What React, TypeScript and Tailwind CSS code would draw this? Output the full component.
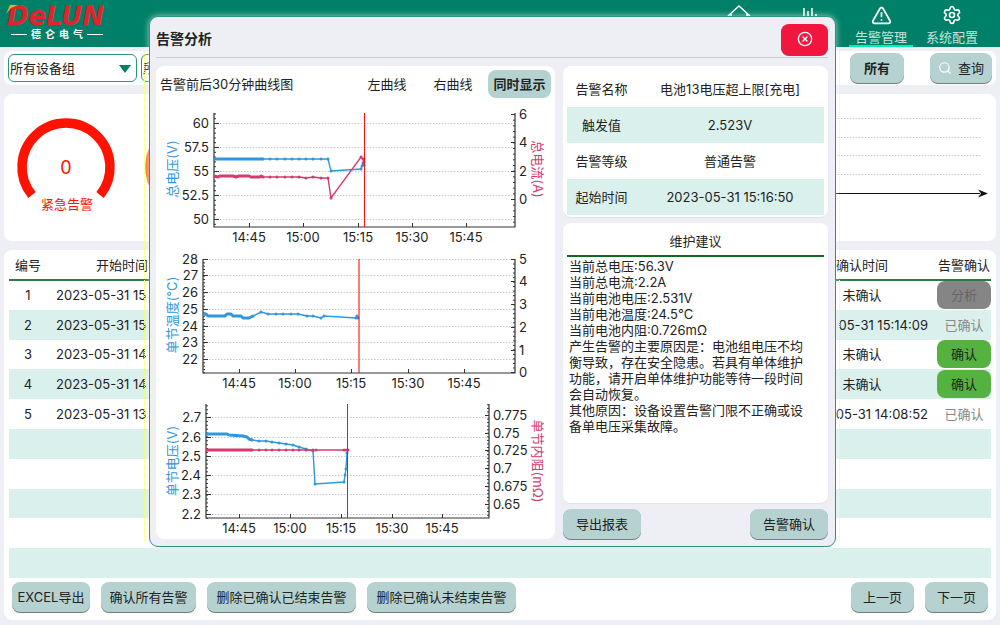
import type { ReactNode } from 'react'
import { CircleX, Search, Settings, TriangleAlert } from 'lucide-react'

const BLUE = '#2f97dd'
const PINK = '#d63b6e'

type Point = [number, number]
type Tick = [string, number]

interface Series {
  color: string
  dense: Point[]
  sparse: Point[]
}

interface ChartProps {
  height: number
  left: number
  right: number
  top: number
  bottom: number
  leftTitle: string
  rightTitle?: string
  leftTicks: Tick[]
  rightTicks: Tick[]
  timeTicks: number[]
  alarmX: number
  softAlarm?: boolean
  series: Series[]
}

const times = ['14:45', '15:00', '15:15', '15:30', '15:45']

const toPoints = (points: Point[]) => points.map((p) => p.join(',')).join(' ')

// Small ticks at a fifth of the main step, carried on to both ends of the axis
function minorTicks(ticks: Tick[], top: number, bottom: number) {
  const first = ticks[0][1]
  const step = (ticks[ticks.length - 1][1] - first) / (ticks.length - 1) / 5
  const result: number[] = []
  for (let i = -20; i < 60; i++) {
    const y = first + i * step
    if (y >= top && y <= bottom) result.push(y)
  }
  return result
}

function Chart(props: ChartProps) {
  const { height, left, right, top, bottom, leftTicks, rightTicks, series } = props
  return (
    <svg viewBox={`0 0 399 ${height}`} className="block w-full text-[13px]" fill="#222">
      {leftTicks.map(([label, y]) => (
        <g key={label}>
          <line x1={left} x2={right} y1={y + 0.5} y2={y + 0.5} stroke="#c9c9c9" strokeDasharray="1.5 1.5" />
          <line x1={left} x2={left + 5} y1={y + 0.5} y2={y + 0.5} stroke="#333" />
          <text x={left - 5} y={y + 5} textAnchor="end">
            {label}
          </text>
        </g>
      ))}
      {rightTicks.map(([label, y]) => (
        <g key={label}>
          <line x1={right - 4} x2={right} y1={y + 0.5} y2={y + 0.5} stroke="#333" />
          <text x={right + 4} y={y + 5}>
            {label}
          </text>
        </g>
      ))}
      {minorTicks(leftTicks, top, bottom).map((y) => (
        <line key={y} x1={left} x2={left + 2} y1={y + 0.5} y2={y + 0.5} stroke="#333" />
      ))}
      {minorTicks(rightTicks, top, bottom).map((y) => (
        <line key={y} x1={right - 2} x2={right} y1={y + 0.5} y2={y + 0.5} stroke="#333" />
      ))}
      {props.timeTicks.map((x, i) => (
        <g key={x}>
          <line x1={x + 0.5} x2={x + 0.5} y1={bottom - 4} y2={bottom} stroke="#333" />
          <text x={x} y={bottom + 15} textAnchor="middle">
            {times[i]}
          </text>
        </g>
      ))}
      <path d={`M${left} ${top}V${bottom}H${right}V${top}`} fill="none" stroke="#333" strokeWidth="1.2" />

      {series.map((s) => (
        <g key={s.color} fill="none" stroke={s.color}>
          <polyline points={toPoints(s.dense)} strokeWidth="3" strokeLinejoin="round" />
          <polyline points={toPoints(s.sparse)} strokeWidth="1.4" />
          {s.sparse.map(([x, y], i) => (
            <circle key={i} cx={x} cy={y} r="1.5" fill={s.color} stroke="none" />
          ))}
        </g>
      ))}
      <line
        x1={props.alarmX}
        x2={props.alarmX}
        y1={top}
        y2={bottom}
        stroke="#ff1010"
        strokeWidth={props.softAlarm ? 2 : 1}
        opacity={props.softAlarm ? 0.55 : 1}
      />
      <text transform="translate(21 65) rotate(-90)" textAnchor="middle" fill={BLUE}>
        {props.leftTitle}
      </text>
      {props.rightTitle && (
        <text transform="translate(377 65) rotate(90)" textAnchor="middle" fill={PINK}>
          {props.rightTitle}
        </text>
      )}
    </svg>
  )
}

const charts: ChartProps[] = [
  {
    height: 146,
    left: 58,
    right: 359,
    top: 9,
    bottom: 123,
    leftTitle: '总电压(V)',
    rightTitle: '总电流(A)',
    leftTicks: [['60', 19], ['57.5', 43], ['55', 67], ['52.5', 91], ['50', 115]],
    rightTicks: [['6', 10], ['4', 38], ['2', 67], ['0', 95]],
    timeTicks: [93, 147, 202, 256, 310],
    alarmX: 208.5,
    series: [
      {
        color: BLUE,
        dense: [[58, 55], [107, 55]],
        sparse: [
          [107, 55], [114, 55], [121, 55], [129, 55], [136, 55], [143, 55], [150, 55], [157, 55],
          [165, 55], [172, 55], [175, 67], [205, 65], [206, 62], [207, 59], [208, 55],
        ],
      },
      {
        color: PINK,
        dense: [[58, 72], [62, 73], [64, 72], [77, 72], [80, 73], [83, 72], [93, 72], [95, 73], [104, 73], [105, 72], [107, 73]],
        sparse: [
          [107, 73], [114, 73], [121, 73], [129, 73], [136, 73], [143, 73], [150, 74], [157, 73],
          [165, 74], [172, 74], [175, 94], [205, 53], [207, 55], [208, 58], [208, 61],
        ],
      },
    ],
  },
  {
    height: 146,
    left: 47,
    right: 359,
    top: 9,
    bottom: 123,
    leftTitle: '单节温度(℃)',
    leftTicks: [['28', 9], ['27', 25], ['26', 42], ['25', 59], ['24', 76], ['23', 92], ['22', 109]],
    rightTicks: [['5', 9], ['4', 31], ['3', 54], ['2', 77], ['1', 100], ['0', 122]],
    timeTicks: [83, 139, 195, 252, 308],
    alarmX: 203,
    softAlarm: true,
    series: [
      {
        color: BLUE,
        dense: [
          [47, 64], [50, 64], [52, 66], [69, 66], [71, 64], [75, 64], [77, 66], [85, 66],
          [87, 68], [93, 68], [97, 66],
        ],
        sparse: [
          [97, 66], [105, 62], [112, 64], [120, 64], [127, 64], [135, 64], [142, 64], [151, 66],
          [157, 66], [165, 68], [168, 66], [200, 68], [201, 66], [202, 68], [201, 67],
        ],
      },
    ],
  },
  {
    height: 143,
    left: 50,
    right: 333,
    top: 8,
    bottom: 122,
    leftTitle: '单节电压(V)',
    rightTitle: '单节内阻(mΩ)',
    leftTicks: [['2.7', 21], ['2.6', 41], ['2.5', 60], ['2.4', 79], ['2.3', 98], ['2.2', 118]],
    rightTicks: [['0.775', 19], ['0.75', 37], ['0.725', 54], ['0.7', 72], ['0.675', 90], ['0.65', 108]],
    timeTicks: [83, 134, 185, 236, 286],
    alarmX: 191.5,
    series: [
      {
        color: BLUE,
        dense: [[50, 38], [71, 38], [73, 39], [87, 40], [91, 41], [93, 43], [96, 44]],
        sparse: [
          [96, 44], [103, 45], [110, 45], [116, 46], [123, 47], [130, 48], [137, 49], [143, 51],
          [150, 53], [157, 55], [159, 88], [188, 86], [189, 79], [190, 73], [191, 57],
        ],
      },
      {
        color: PINK,
        dense: [[50, 54], [96, 54]],
        sparse: [
          [96, 54], [103, 54], [110, 54], [116, 54], [123, 54], [130, 54], [137, 54], [143, 54],
          [150, 54], [157, 54], [160, 54], [188, 54], [190, 54], [192, 54],
        ],
      },
    ],
  },
]

const alarms = [
  { start: '2023-05-31 15', confirmed: '未确认', action: 'analyse' },
  { start: '2023-05-31 15', confirmed: '05-31 15:14:09', action: 'done' },
  { start: '2023-05-31 14', confirmed: '未确认', action: 'confirm' },
  { start: '2023-05-31 14', confirmed: '未确认', action: 'confirm' },
  { start: '2023-05-31 13', confirmed: '05-31 14:08:52', action: 'done' },
  ...Array.from({ length: 5 }, () => ({ start: '', confirmed: '', action: '' })),
]

const details = [
  ['告警名称', '电池13电压超上限[充电]'],
  ['触发值', '2.523V'],
  ['告警等级', '普通告警'],
  ['起始时间', '2023-05-31 15:16:50'],
]

const advice = [
  '当前总电压:56.3V',
  '当前总电流:2.2A',
  '当前电池电压:2.531V',
  '当前电池温度:24.5℃',
  '当前电池内阻:0.726mΩ',
  '产生告警的主要原因是：电池组电压不均衡导致，存在安全隐患。若具有单体维护功能，请开启单体维护功能等待一段时间会自动恢复。',
  '其他原因：设备设置告警门限不正确或设备单电压采集故障。',
]

function Button({ className = '', children }: { className?: string; children: ReactNode }) {
  return (
    <button
      type="button"
      className={`flex h-[30px] shrink-0 items-center justify-center whitespace-nowrap rounded-lg bg-[#b5d2d1] shadow-[0_1px_0_#6f7f7f] ${className}`}
    >
      {children}
    </button>
  )
}

function HomeIcon() {
  return (
    <svg viewBox="0 0 24 22" className="h-[22px] w-6" fill="none" stroke="currentColor" strokeWidth="1.5">
      <path d="M1 11L12 1L23 11M4 9V21H20V9" />
    </svg>
  )
}

function StatsIcon() {
  return (
    <svg viewBox="0 0 20 20" className="h-5 w-5" fill="none" stroke="currentColor" strokeWidth="1.5">
      <path d="M4 3V15M8 6V15M12 3V15M16 9V15M2 18H18" />
    </svg>
  )
}

function NavItem({ icon, label, active }: { icon: ReactNode; label?: string; active?: boolean }) {
  return (
    <a
      href="#"
      className={`flex h-full w-16 flex-col items-center justify-between border-b-2 pt-[5px] text-[#c4e2dc] ${active ? 'border-[#00f0b0]' : 'border-transparent'}`}
    >
      <span className="text-white">{icon}</span>
      <span className="h-4 leading-4">{label}</span>
    </a>
  )
}

function Gauge({ color, value, label }: { color: string; value?: string; label?: string }) {
  return (
    <svg viewBox="0 0 124 147" className="h-[147px] w-[124px] shrink-0" fill={color} textAnchor="middle">
      <path d="M28 101A44 44 0 1 1 96 101" fill="none" stroke={color} strokeWidth="9.5" />
      <text x="62" y="80" className="text-[18px]">{value}</text>
      <text x="63" y="115" className="text-[13px]">{label}</text>
    </svg>
  )
}

function DeviceSelect({ label, options }: { label: string; options: string[] }) {
  return (
    <div className="relative w-[129px]">
      <select
        aria-label={label}
        className="h-7 w-full appearance-none rounded-md border border-[#2b9480] bg-white pl-px text-[#222]"
      >
        {options.map((option) => (
          <option key={option}>{option}</option>
        ))}
      </select>
      <svg viewBox="0 0 12 8" className="pointer-events-none absolute right-[6px] top-[11px] h-2 w-3">
        <path d="M0 0H12L6 8Z" fill="#008068" />
      </svg>
    </div>
  )
}

function Header() {
  return (
    <header className="flex h-[47px] items-stretch justify-between bg-[#008068] pr-4">
      <div className="relative w-[112px] pl-[7px] pt-1">
        <div className="font-['DejaVu_Sans'] text-[26px] font-bold italic leading-6 text-[#e0242c]">DeLUN</div>
        <svg viewBox="0 0 12 9" className="absolute left-[6px] top-[5px] h-[9px] w-3">
          <path d="M4 0H12L5 3L0 9Z" fill="#f3a63a" />
        </svg>
        <div className="flex items-center gap-1 pl-1 text-[10px] font-bold leading-3 text-white">
          <span className="h-px w-4 bg-white" />
          <span>德</span>
          <span>仑</span>
          <span>电</span>
          <span>气</span>
          <span className="h-px w-4 bg-white" />
        </div>
      </div>
      <nav className="flex gap-[7px]">
        <NavItem icon={<HomeIcon />} />
        <NavItem icon={<StatsIcon />} />
        <NavItem icon={<TriangleAlert size={21} strokeWidth={2} />} label="告警管理" active />
        <NavItem icon={<Settings size={20} strokeWidth={2} />} label="系统配置" />
      </nav>
    </header>
  )
}

function AlarmTable() {
  return (
    <table className="h-[328px] w-full table-fixed border-collapse text-center">
      <colgroup>
        <col className="w-[38px]" />
        <col className="w-[150px]" />
        <col />
        <col className="w-[150px]" />
        <col className="w-[54px]" />
      </colgroup>
      <thead>
        <tr className="h-[30px] border-b-2 border-[#2a7d3c]">
          <th className="whitespace-nowrap font-normal">编号</th>
          <th className="font-normal">开始时间</th>
          <td />
          <th className="font-normal">确认时间</th>
          <th className="whitespace-nowrap font-normal">告警确认</th>
        </tr>
      </thead>
      <tbody>
        {alarms.map((alarm, i) => (
          <tr key={i} className="h-[29px] even:bg-[#daf0ed]">
            <td>{alarm.start && i + 1}</td>
            <td className="whitespace-nowrap pl-[9px] text-left">{alarm.start}</td>
            <td />
            <td className={`whitespace-nowrap ${alarm.action === 'done' ? 'pr-[9px] text-right' : ''}`}>
              {alarm.confirmed}
            </td>
            <td className="p-0">
              {alarm.action === 'analyse' && (
                <button type="button" disabled className="block h-7 w-full rounded-lg bg-[#858585] text-[#666]">
                  分析
                </button>
              )}
              {alarm.action === 'confirm' && (
                <button type="button" className="block h-7 w-full rounded-lg bg-[#55b240]">
                  确认
                </button>
              )}
              {alarm.action === 'done' && <span className="text-[#888]">已确认</span>}
            </td>
          </tr>
        ))}
      </tbody>
    </table>
  )
}

function AnalysisDialog() {
  return (
    <div
      role="dialog"
      aria-labelledby="dialog-title"
      className="absolute left-[149px] right-[164px] top-4 rounded-[9px] border border-[#2b9480] bg-[#eeeff4] pb-[7px] pl-[6px] pr-[7px] shadow-[0_0_6px_rgba(255,255,255,0.6)]"
    >
      <div className="flex h-[41px] items-center justify-between border-b border-[#c9c9cb]">
        <h2 id="dialog-title" className="pt-1 text-[14px] font-bold">告警分析</h2>
        <button
          type="button"
          aria-label="关闭"
          className="mt-1 flex h-[31px] w-[47px] items-center justify-center rounded-lg bg-[#f0163e] text-white shadow-[0_1px_0_#8a4a55]"
        >
          <CircleX size={16} strokeWidth={2} />
        </button>
      </div>

      <div className="mt-2 flex gap-2">
        <section className="min-w-0 flex-1 rounded-lg bg-white">
          <div className="flex h-[38px] items-center px-1 pb-[3px]">
            <h3 className="flex-1">告警前后30分钟曲线图</h3>
            <div className="flex items-center">
              <button type="button" className="w-[66px]">左曲线</button>
              <button type="button" className="w-[66px]">右曲线</button>
              <button type="button" className="ml-[2px] h-7 w-[63px] rounded-lg bg-[#b5d2d1] font-bold">
                同时显示
              </button>
            </div>
          </div>
          {charts.map((chart) => (
            <Chart key={chart.leftTitle} {...chart} />
          ))}
        </section>

        <div className="flex w-[265px] flex-col">
          <section className="rounded-lg bg-white px-1 pb-[2px] pt-[5px] shadow-[0_1px_1px_rgba(0,0,0,0.05)]">
            <table className="w-full text-center">
              <tbody>
                {details.map(([name, value]) => (
                  <tr key={name} className="h-9 even:bg-[#daf0ed]">
                    <th className="w-[69px] font-normal">{name}</th>
                    <td>{value}</td>
                  </tr>
                ))}
              </tbody>
            </table>
          </section>
          <section className="mt-[6px] flex-1 rounded-lg bg-white px-1 shadow-[0_1px_1px_rgba(0,0,0,0.05)]">
            <h3 className="flex h-[34px] items-center justify-center border-b-2 border-[#0c6b1e] pt-1">维护建议</h3>
            <div className="pl-[2px] pr-4 pt-px leading-4">
              {advice.map((line) => (
                <p key={line}>{line}</p>
              ))}
            </div>
          </section>
          <div className="mt-[6px] flex justify-between">
            <Button className="w-[78px]">导出报表</Button>
            <Button className="w-[78px]">告警确认</Button>
          </div>
        </div>
      </div>
    </div>
  )
}

export default function App() {
  return (
    <div className="relative flex min-h-screen flex-col bg-[#eeeff4] font-['Inter','Noto_Sans_CJK_SC',sans-serif] text-[13px] leading-4 text-[#222]">
      <Header />

      <main className="flex flex-1 flex-col px-1 pb-[5px] pt-1">
        <div className="flex h-[34px] items-center justify-between rounded-lg bg-white px-1">
          <div className="flex gap-1">
            <DeviceSelect label="设备组" options={['所有设备组']} />
            <DeviceSelect label="设备" options={['所有设备']} />
          </div>
          <div className="flex gap-[26px]">
            <Button className="w-[54px] font-bold">所有</Button>
            <Button className="w-[62px] gap-[6px]">
              <Search size={14} strokeWidth={2} className="text-white" />
              查询
            </Button>
          </div>
        </div>

        <section className="mt-[9px] flex h-[147px] justify-between rounded-lg bg-white">
          <div className="flex gap-1">
            <Gauge color="#ff1200" value="0" label="紧急告警" />
            <Gauge color="#f0743c" />
          </div>
          <svg viewBox="0 0 360 147" className="mr-2 h-[147px] w-[360px]" fill="none">
            <path d="M0 24.5H353M0 43.5H353M0 61.5H353M0 80.5H353" stroke="#c9c9c9" strokeDasharray="1.5 1.5" />
            <path d="M0 99.5H352" stroke="#111" />
            <path d="M360 99.5L350 95.5L353 99.5L350 103.5Z" fill="#111" />
          </svg>
        </section>

        <section className="mt-[9px] flex flex-1 flex-col justify-between rounded-lg bg-white px-[5px] pb-2">
          <AlarmTable />
          <div className="flex justify-between px-[3px]">
            <div className="flex gap-[11px]">
              <Button className="w-[78px]">EXCEL导出</Button>
              <Button className="w-[95px]">确认所有告警</Button>
              <Button className="w-[149px]">删除已确认已结束告警</Button>
              <Button className="w-[149px]">删除已确认未结束告警</Button>
            </div>
            <div className="flex gap-[11px]">
              <Button className="w-[63px]">上一页</Button>
              <Button className="w-[63px]">下一页</Button>
            </div>
          </div>
        </section>
      </main>

      {/* dotted guides either side of the dialog */}
      <div className="pointer-events-none absolute bottom-[84px] left-[144px] right-[160px] top-[51px] border-x border-dotted border-[#f6f68a]" />
      <AnalysisDialog />
    </div>
  )
}
